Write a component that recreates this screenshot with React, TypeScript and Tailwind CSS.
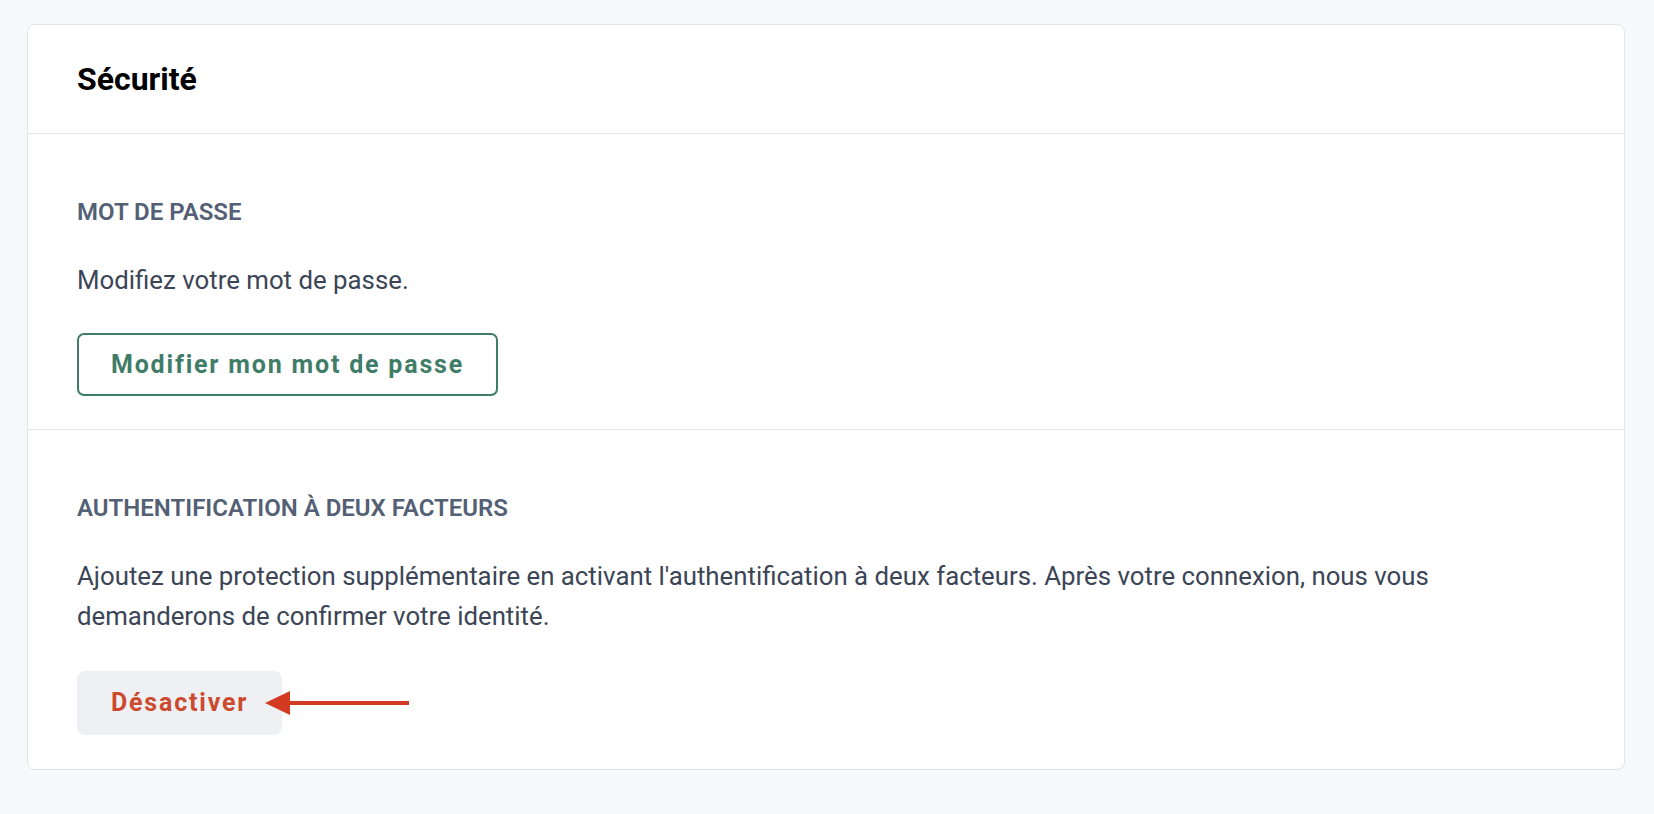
const Arrow = () => (
  <svg
    className="absolute left-[188px] top-[19px] pointer-events-none"
    width="146"
    height="26"
    viewBox="0 0 146 26"
  >
    <polygon points="0,13 25,1 25,25" fill="#d23b22" />
    <line x1="22" y1="13" x2="144" y2="13" stroke="#d23b22" strokeWidth="4" />
  </svg>
);

const SectionTitle = ({ children }: { children: React.ReactNode }) => (
  <h3 className="text-[24px] leading-[32px] font-semibold uppercase text-[#536075]">
    {children}
  </h3>
);

export default function App() {
  return (
    <div className="min-h-screen bg-[#f8f9fa] pl-[27px] pr-[29px] pt-[24px] font-['Roboto',sans-serif]">
      <div className="bg-white border border-[#e2e4e9] rounded-[8px]">
        <div className="h-[109px] flex items-center px-[49px] border-b border-[#e2e4e9]">
          <h2 className="text-[32px] font-bold text-black">Sécurité</h2>
        </div>

        <section className="px-[49px] pt-[62px] pb-[33px] border-b border-[#e2e4e9]">
          <SectionTitle>Mot de passe</SectionTitle>
          <p className="mt-[32px] text-[25.8px] leading-[40px] text-[#3b4556]">
            Modifiez votre mot de passe.
          </p>
          <button className="mt-[33px] h-[63px] px-[32px] rounded-[7px] border-2 border-[#3f7d68] bg-white text-[25px] font-bold tracking-[1.8px] text-[#3f7d68]">
            Modifier mon mot de passe
          </button>
        </section>

        <section className="px-[49px] pt-[62px] pb-[34px]">
          <SectionTitle>Authentification à deux facteurs</SectionTitle>
          <p className="mt-[32px] text-[25.8px] leading-[40px] text-[#3b4556]">
            Ajoutez une protection supplémentaire en activant l'authentification à deux facteurs. Après votre
            connexion, nous vous demanderons de confirmer votre identité.
          </p>
          <div className="relative mt-[35px] w-fit">
            <button className="h-[64px] px-[34px] rounded-[8px] bg-[#eff0f4] text-[25px] font-bold tracking-[1.8px] text-[#cc4a2d]">
              Désactiver
            </button>
            <Arrow />
          </div>
        </section>
      </div>
    </div>
  );
}
